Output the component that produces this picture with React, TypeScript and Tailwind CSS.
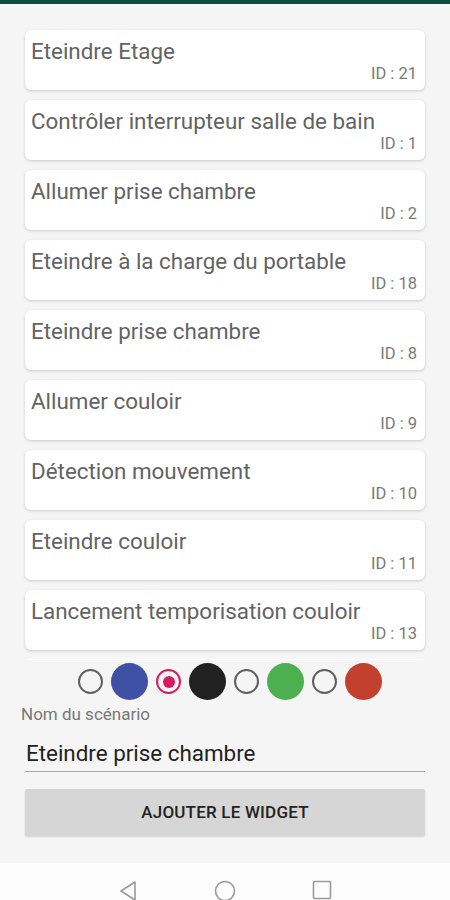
import React from "react";

const items: [string, number][] = [
  ["Eteindre Etage", 21],
  ["Contrôler interrupteur salle de bain", 1],
  ["Allumer prise chambre", 2],
  ["Eteindre à la charge du portable", 18],
  ["Eteindre prise chambre", 8],
  ["Allumer couloir", 9],
  ["Détection mouvement", 10],
  ["Eteindre couloir", 11],
  ["Lancement temporisation couloir", 13],
];

function Radio({ selected }: { selected?: boolean }) {
  if (selected) {
    return (
      <div className="w-[25px] h-[25px] rounded-full border-[2.5px] border-[#d81b60] flex items-center justify-center">
        <div className="w-[12px] h-[12px] rounded-full bg-[#d81b60]" />
      </div>
    );
  }
  return <div className="w-[25px] h-[25px] rounded-full border-[2.5px] border-[#5f5f5f]" />;
}

export default function App() {
  return (
    <div
      className="w-[450px] h-[900px] bg-[#f5f5f5] flex flex-col overflow-hidden"
      style={{ fontFamily: "Roboto, 'Noto Sans', sans-serif" }}
    >
      <div className="h-[4px] bg-[#0b4f3c]" />
      <div className="px-[25px] pt-[26px] flex flex-col gap-[10px]">
        {items.map(([t, id]) => (
          <div
            key={id}
            className="bg-white rounded-[6px] shadow-[0_1px_3px_rgba(0,0,0,0.18)] h-[60px] pt-[8px] pl-[6px] pr-[8px] flex flex-col"
          >
            <div className="text-[22.4px] leading-[27px] text-[#636363]">{t}</div>
            <div className="text-[16.5px] leading-[18px] text-[#7a7a7a] text-right">ID : {id}</div>
          </div>
        ))}
      </div>
      <div className="mx-[27px] mt-[9px] h-[1px] bg-[#fdfdfd]" />
      <div className="flex items-center justify-center gap-[8px] pl-[10px] mt-[3px]">
        <Radio />
        <div className="w-[37px] h-[37px] rounded-full bg-[#3f51a5]" />
        <Radio selected />
        <div className="w-[37px] h-[37px] rounded-full bg-[#212121]" />
        <Radio />
        <div className="w-[37px] h-[37px] rounded-full bg-[#4caf50]" />
        <Radio />
        <div className="w-[37px] h-[37px] rounded-full bg-[#c2412e]" />
      </div>
      <div className="pl-[21px] mt-[4px] text-[17px] leading-[20px] text-[#777]">Nom du scénario</div>
      <div className="mx-[25px] mt-[15px] border-b-[1.5px] border-[#a8a8a8] pb-[4px]">
        <div className="pl-[1px] text-[22.4px] leading-[28px] text-[#222]">Eteindre prise chambre</div>
      </div>
      <div className="mx-[25px] mt-[17px] h-[47px] bg-[#d6d6d6] rounded-[2px] shadow-[0_1px_2px_rgba(0,0,0,0.15)] flex items-center justify-center text-[17px] font-medium text-[#222] tracking-[0.2px]">
        AJOUTER LE WIDGET
      </div>
      <div className="flex-1" />
      <div className="h-[37px] bg-[#fcfcfc] flex items-start justify-center gap-[76px] pt-[17px]">
        <svg width="20" height="22" viewBox="0 0 20 22" fill="none" stroke="#9a9a9a" strokeWidth="1.6" strokeLinejoin="round">
          <path d="M17 2 L3 11 L17 20 Z" />
        </svg>
        <svg width="22" height="22" viewBox="0 0 22 22" fill="none" stroke="#9a9a9a" strokeWidth="1.6">
          <circle cx="11" cy="11" r="9.5" />
        </svg>
        <svg width="20" height="20" viewBox="0 0 20 20" fill="none" stroke="#9a9a9a" strokeWidth="1.6">
          <rect x="1.5" y="1.5" width="17" height="17" rx="1" />
        </svg>
      </div>
    </div>
  );
}
